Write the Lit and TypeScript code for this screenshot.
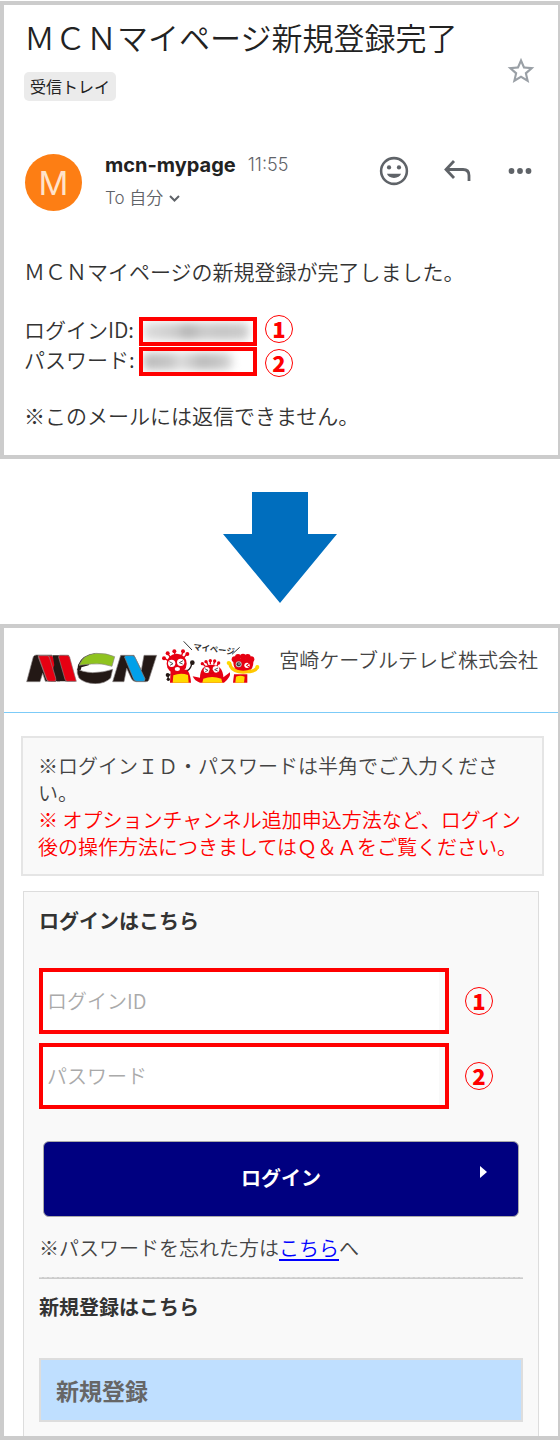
import { LitElement, html, css, svg } from "lit";
import { customElement } from "lit/decorators.js";

const mcnLogo = html`
  <svg class="logo" viewBox="48 96 396 96" role="img" aria-label="MCN">
    <g stroke="#8a8484" stroke-width="2" stroke-linejoin="round">
      <path fill="#231815" d="M70 110Q73 105 79 105H126L142 145L150 106H176L196 184H166L150 150L136 184H106L98 160L90 185H50Z" />
      <path fill="#e60012" d="M85 107H124Q129 108 131 114L136 128L137 184H117Q112 183 110 178L85 112Z" />
      <path fill="#231815" d="M122 184L131 140L150 106H164L166 184Z" stroke="none" />
      <path fill="#e60012" d="M85 107H112Q117 108 119 114L138 177Q139 184 132 184H117Q112 183 110 178Z" />
      <path fill="#231815" d="M128 106H148L160 150L150 184H141Z" stroke="none" />
      <path fill="#e60012" d="M147 106H172Q177 107 179 112L199 184H171Q167 183 165 178L146 112Z" />
      <path fill="#231815" d="M202 146Q215 156 248 158Q280 158 308 148L302 174Q285 191 256 191Q222 190 207 174Q199 160 202 146Z" />
      <path fill="#231815" d="M204 135Q216 104 256 100L236 136L214 142L213 148Q212 152 202 150Z" stroke="none" />
      <path fill="#8fc31f" d="M207 136Q220 103 258 100Q290 99 314 110L306 139Q275 128 245 132Q222 134 207 136Z" />
      <path fill="#231815" d="M332 106H372L394 150L402 106H440L416 181Q414 185 408 185H378Q368 184 365 177L350 145L342 185H308Z" />
      <path fill="#00a0e9" d="M346 107H368Q373 108 376 114L405 176Q406 184 398 184H381Q374 184 371 178L344 112Z" />
    </g>
  </svg>`;

const dots = (points: number[][], r: number) =>
  points.map(([x, y]) => svg`<circle cx=${x} cy=${y} r=${r} fill="#e60012" />`);

const mascots = html`
  <svg class="mascots" viewBox="33 60 300 135" role="img" aria-label="マイページ">
    <g fill="none" stroke="#333" stroke-width="3">
      <path d="M101 67L126 93M269 85L246 106" />
    </g>
    <text class="mascot-text" x="129" y="92" transform="rotate(7 129 92)">マイページ</text>
    <g stroke="#e60012" stroke-width="4">
      <path d="M44 118L56 126M53 104L64 118M73 98L76 112M99 98L94 112M111 105L100 118" />
    </g>
    ${dots([[42, 118], [53, 103], [73, 97], [99, 97], [112, 105]], 6)}
    <circle cx="80" cy="134" r="30" fill="#e60012" />
    <path fill="#e60012" d="M62 152H112Q122 168 123 191H60Z" />
    <path fill="#ffd900" d="M70 169Q92 160 114 168L116 191H68Z" />
    <circle cx="65" cy="133" r="11" fill="#fff" /><circle cx="92" cy="130" r="11" fill="#fff" />
    <path d="M58 128L69 134L60 139M99 125L88 131L98 135" fill="none" stroke="#555" stroke-width="3" />
    <ellipse cx="82" cy="150" rx="8" ry="6" fill="#fff" />
    <path d="M112 155Q123 150 125 134M61 166Q52 169 55 180" fill="none" stroke="#231815" stroke-width="4" />
    <circle cx="127" cy="131" r="7" fill="#231815" /><circle cx="53" cy="168" r="6" fill="#231815" /><circle cx="55" cy="181" r="5" fill="#231815" />
    <g stroke="#e60012" stroke-width="4">
      <path d="M158 134L166 142M169 128L174 138M181 125V136M194 126L191 137M206 132L200 142" />
    </g>
    ${dots([[157, 134], [168, 128], [181, 125], [194, 126], [206, 132]], 5)}
    <path fill="#e60012" d="M128 172L150 176Q150 139 183 137Q219 138 220 175L240 160Q243 175 222 191H150Q134 186 128 172Z" />
    <path fill="#ffd900" d="M160 179Q186 169 214 179L217 191H157Z" />
    <circle cx="170" cy="153" r="9" fill="#fff" /><circle cx="198" cy="151" r="10" fill="#fff" />
    <path d="M164 149L174 154L166 158M204 147L194 152L203 156" fill="none" stroke="#555" stroke-width="3" />
    <ellipse cx="184" cy="158" rx="7" ry="5" fill="#e60012" stroke="#a00" stroke-width="1" />
    <path fill="none" stroke="#ffc800" stroke-width="10" stroke-linecap="round" d="M239 133Q242 153 266 158H300Q316 156 322 145" />
    <circle cx="236" cy="132" r="6" fill="#ffd900" /><circle cx="322" cy="144" r="6" fill="#ffd900" />
    ${dots([[254, 121], [264, 114], [279, 113], [293, 114], [304, 121]], 9)}
    <path fill="#e60012" d="M250 119H309Q313 140 302 153Q280 163 257 151Q248 139 250 119Z" />
    <path fill="#ffc800" d="M254 150Q280 161 304 150L298 160Q280 168 260 160Z" />
    <path fill="#e60012" d="M252 166H292V191H249Z" />
    <path fill="#ffd900" d="M258 173Q271 167 284 173L282 191H256Z" />
    <circle cx="266" cy="136" r="9" fill="#b9c4c4" /><circle cx="266" cy="136" r="6" fill="#353b3a" /><circle cx="267" cy="135" r="2" fill="#fff" />
    <circle cx="291" cy="139" r="8" fill="#fff" />
    <path d="M298 133L289 139L298 144" fill="none" stroke="#e60012" stroke-width="3" />
  </svg>`;

@customElement("mail-view")
export class MailView extends LitElement {
  static styles = css`
    :host { display: block; }
    .mail { padding: 10px 21px 25px 20px; color: #222; }
    .subject-row { display: flex; justify-content: space-between; align-items: flex-start; height: 86px; }
    .subject { margin: 0; font-size: 31px; line-height: 44px; font-weight: inherit; white-space: nowrap; }
    .folder { display: inline-block; margin-top: 13px; padding: 0 6px; font-size: 16px; line-height: 29px; font-weight: 400; border-radius: 5px; background: #ebebeb; }
    .icon-button { display: block; padding: 0; border: 0; background: none; color: #5f6368; }
    .icon { display: block; width: 34px; height: 34px; fill: currentColor; }
    .star { margin-top: 40px; color: #9aa0a6; }
    .star .icon { width: 32px; height: 32px; }
    .sender-row { display: flex; align-items: center; margin-top: 48px; }
    .avatar { width: 57px; height: 57px; margin-left: 1px; border-radius: 50%; background: #fd7e14; color: #ffe3cb; font: 33px/58px Inter, sans-serif; text-align: center; }
    .who { flex: 1; margin-left: 23px; font-family: Inter, "Noto Sans CJK JP", sans-serif; }
    .name-line { display: flex; align-items: center; gap: 12px; line-height: 32px; }
    .name { font-size: 20px; font-weight: 700; }
    .time, .to { color: #5f6368; }
    .time { font-size: 18px; font-weight: 300; }
    .to { display: flex; align-items: center; gap: 6px; font-size: 17px; line-height: 34px; }
    .chevron { width: 11px; height: 7px; fill: none; stroke: #5f6368; stroke-width: 2; }
    .actions { display: flex; gap: 29px; padding-bottom: 22px; }
    .body { margin-top: 42px; font-size: 21px; line-height: 29px; color: #333; }
    .body p { margin: 0; }
    .account { display: flex; gap: 8px; align-items: center; margin: 29px 0 24px; }
    .fields { display: grid; grid-template-columns: auto 118px; row-gap: 1px; margin: 0; }
    .fields dt { min-width: 115px; line-height: 25px; white-space: nowrap; }
    .fields dd { margin: 0; box-sizing: border-box; height: 29px; padding: 2px 0; border: 4px solid #f00; overflow: hidden; }
    .smudge { width: 106px; height: 17px; border-radius: 6px; background: linear-gradient(90deg, #ddd, #ccc 30%, #b5b5b5 42%, #ccc 58%, #c5c5c5 75%, #ccc); filter: blur(4px); }
    .smudge.short { width: 90px; background: linear-gradient(90deg, #bbb, #c5c5c5 30%, #ddd 42%, #bbb 65%, #c5c5c5 85%, #ddd); }
    .marks { display: flex; flex-direction: column; gap: 6px; }
  `;
  render() {
    return html`
      <article class="mail">
        <header class="subject-row">
          <div>
            <h1 class="subject">ＭＣＮマイページ新規登録完了</h1>
            <span class="folder">受信トレイ</span>
          </div>
          <button class="icon-button star" aria-label="スター">
            <svg class="icon" viewBox="0 0 24 24"><path d="M22 9.24l-7.19-.62L12 2 9.19 8.63 2 9.24l5.46 4.73L5.82 21 12 17.27 18.18 21l-1.63-7.03L22 9.24zM12 15.4l-3.76 2.27 1-4.28-3.32-2.88 4.38-.38L12 6.1l1.71 4.04 4.38.38-3.32 2.88 1 4.28L12 15.4z" /></svg>
          </button>
        </header>
        <div class="sender-row">
          <div class="avatar">M</div>
          <div class="who">
            <div class="name-line"><span class="name">mcn-mypage</span><span class="time">11:55</span></div>
            <div class="to">To 自分 <svg class="chevron" viewBox="0 0 11 7"><path d="M1 1l4.500 4.500L10 1" /></svg></div>
          </div>
          <div class="actions">
            <button class="icon-button" aria-label="リアクション">
              <svg class="icon" viewBox="0 0 24 24"><path fill-rule="evenodd" d="M12 2a10 10 0 1 0 0 20a10 10 0 0 0 0-20zm0 1.800a8.200 8.200 0 1 1 0 16.400a8.200 8.200 0 0 1 0-16.400zM7 14h10a5.200 4 0 0 1-10 0z" /><circle cx="8.500" cy="9.500" r="1.500" /><circle cx="15.500" cy="9.500" r="1.500" /></svg>
            </button>
            <button class="icon-button" aria-label="返信">
              <svg class="icon" viewBox="0 0 34 34"><path d="M14 7L6 15.500L14 24M6 15.500H23Q29 15.500 29 21.500V27" fill="none" stroke="currentColor" stroke-width="2.800" /></svg>
            </button>
            <button class="icon-button" aria-label="その他">
              <svg class="icon" viewBox="0 0 34 34"><circle cx="8.500" cy="17" r="2.900" /><circle cx="17" cy="17" r="2.900" /><circle cx="25.500" cy="17" r="2.900" /></svg>
            </button>
          </div>
        </div>
        <div class="body">
          <p>ＭＣＮマイページの新規登録が完了しました。</p>
          <div class="account">
            <dl class="fields">
              <dt>ログインID:</dt><dd><div class="smudge"></div></dd>
              <dt>パスワード:</dt><dd><div class="smudge short"></div></dd>
            </dl>
            <div class="marks"><step-mark>1</step-mark><step-mark>2</step-mark></div>
          </div>
          <p>※このメールには返信できません。</p>
        </div>
      </article>`;
  }
}

@customElement("step-mark")
export class StepMark extends LitElement {
  static styles = css`
    :host { display: block; flex: none; box-sizing: border-box; width: 28px; height: 28px; border: 1px solid #f00; border-radius: 50%; color: #f00; font: 900 22px/24px "Noto Sans CJK JP", sans-serif; text-align: center; }
  `;
  render() {
    return html`<slot></slot>`;
  }
}

@customElement("login-view")
export class LoginView extends LitElement {
  static styles = css`
    :host { display: block; font-size: 20px; line-height: 27px; color: #444; }
    .brand { display: flex; justify-content: space-between; padding: 11px 20px 28px 22px; border-bottom: 1px solid #7ccbf8; }
    .marks { display: flex; align-items: flex-end; gap: 3px; height: 45px; }
    .logo { width: 132px; height: 32px; }
    .mascots { width: 100px; height: 45px; }
    .mascot-text { font: 700 25px "Noto Sans CJK JP", sans-serif; fill: #333; }
    .company { padding-top: 7px; white-space: nowrap; }
    .notice { margin: 23px 14px 15px 17px; padding: 14px 15px; border: 2px solid #e5e5e5; background: #f9f9f9; }
    .notice p { margin: 0; }
    .notice .alert { color: #f00; }
    .panel { margin: 0 19px; padding: 15px 15px 14px; border: 1px solid #ddd; border-bottom: 0; background: #f9f9f9; }
    h2 { margin: 0; font-size: 20px; line-height: 27px; font-weight: 700; color: #333; }
    form { margin: 34px 0 0; }
    .field { display: flex; align-items: center; gap: 16px; margin-bottom: 9px; padding-right: 30px; }
    .field input { flex: 1; min-width: 0; box-sizing: border-box; height: 66px; padding: 0 4px 2px; border: 4px solid #f00; border-radius: 0; background: linear-gradient(#f9f9f9, #f9f9f9) right / 6px 100% no-repeat #fff; font: inherit; outline: 0; }
    .field input::placeholder { color: #aaa; opacity: 1; }
    .login { display: grid; grid-template-columns: 1fr auto 1fr; align-items: center; width: calc(100% - 8px); height: 76px; margin: 32px 4px 17px; padding: 0 31px 4px; border: 1px solid #aaa; border-radius: 6px; background: #000080; color: #fff; font: inherit; font-weight: 700; }
    .login span { grid-column: 2; }
    .caret { justify-self: end; width: 7px; height: 22px; fill: #fff; }
    .forgot { margin: 0; }
    .forgot a { color: #00f; text-underline-offset: 3px; }
    .rule { height: 1px; margin: 16px 0 14px; border: 0; border-top: 1px dashed #ddd; background: #ccc; }
    .register { display: block; margin-top: 38px; padding: 0 15px; border: 2px solid #ddd; background: #bfdfff; color: #666; font-size: 23px; line-height: 60px; font-weight: 700; text-decoration: none; }
  `;
  render() {
    return html`
      <header class="brand">
        <div class="marks">${mcnLogo}${mascots}</div>
        <div class="company">宮崎ケーブルテレビ株式会社</div>
      </header>
      <section class="notice">
        <p>※ログインＩＤ・パスワードは半角でご入力ください。</p>
        <p class="alert">※ オプションチャンネル追加申込方法など、ログイン後の操作方法につきましてはＱ＆Ａをご覧ください。</p>
      </section>
      <section class="panel">
        <h2>ログインはこちら</h2>
        <form @submit=${(e: Event) => e.preventDefault()}>
          <div class="field"><input type="text" aria-label="ログインID" placeholder="ログインID" /><step-mark>1</step-mark></div>
          <div class="field"><input type="password" aria-label="パスワード" placeholder="パスワード" /><step-mark>2</step-mark></div>
          <button class="login"><span>ログイン</span><svg class="caret" viewBox="0 0 7 22"><path d="M0 0L7 6L0 12Z" /></svg></button>
        </form>
        <p class="forgot">※パスワードを忘れた方は<a href="#">こちら</a>へ</p>
        <hr class="rule" />
        <h2>新規登録はこちら</h2>
        <a class="register" href="#">新規登録</a>
      </section>`;
  }
}

@customElement("app-root")
export class AppRoot extends LitElement {
  static styles = css`
    :host { display: block; padding: 1px 0 2px; background: #fff; font-family: "Noto Sans CJK JP", sans-serif; font-weight: 350; }
    .frame { border: 4px solid #ccc; border-right-width: 2px; background: #fff; }
    .arrow { display: block; width: 114px; height: 111px; margin: 33px auto 21px; fill: #006ebe; }
  `;
  render() {
    return html`
      <div class="frame"><mail-view></mail-view></div>
      <svg class="arrow" viewBox="0 0 114 111" aria-hidden="true"><path d="M29 0H85V42H114L57 111L0 42H29Z" /></svg>
      <div class="frame"><login-view></login-view></div>`;
  }
}
